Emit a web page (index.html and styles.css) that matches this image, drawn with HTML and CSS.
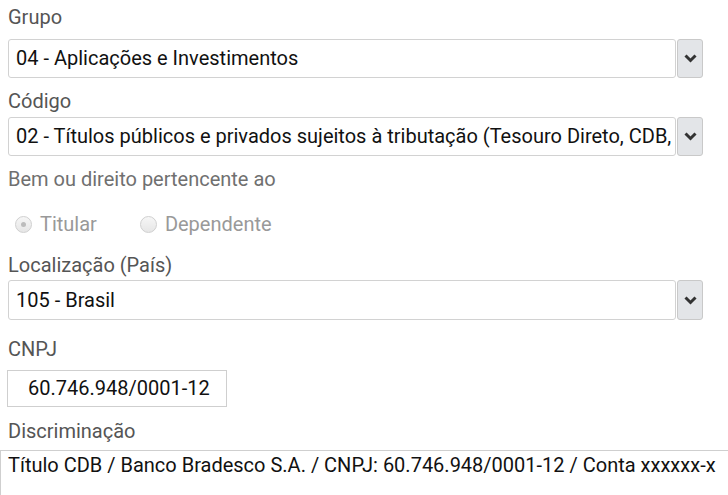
FILE: index.html
```html
<!DOCTYPE html>
<html lang="pt-br">
  <head>
    <meta charset="UTF-8" />
    <meta name="viewport" content="width=device-width, initial-scale=1.0" />
    <title>Bens e Direitos</title>
    <link rel="stylesheet" href="styles.css">
  </head>
  <body>
    <main class="formulario">
      <div class="grupo">
        <label class="rotulo">Grupo</label>
        <div class="combo">
          <div class="combo-valor">04 - Aplicações e Investimentos</div>
          <span class="combo-seta">
            <svg width="13" height="9" viewBox="0 0 13 9"><polyline points="1.5,1.5 6.5,6.5 11.5,1.5" /></svg>
          </span>
        </div>
      </div>

      <div class="grupo grupo-codigo">
        <label class="rotulo">Código</label>
        <div class="combo">
          <div class="combo-valor">02 - Títulos públicos e privados sujeitos à tributação (Tesouro Direto, CDB,</div>
          <span class="combo-seta">
            <svg width="13" height="9" viewBox="0 0 13 9"><polyline points="1.5,1.5 6.5,6.5 11.5,1.5" /></svg>
          </span>
        </div>
      </div>

      <div class="grupo grupo-bem">
        <label class="rotulo rotulo-claro">Bem ou direito pertencente ao</label>
        <div class="radios">
          <label class="radio"><span class="bolinha marcada"></span>Titular</label>
          <label class="radio"><span class="bolinha"></span>Dependente</label>
        </div>
      </div>

      <div class="grupo grupo-local">
        <label class="rotulo">Localização (País)</label>
        <div class="combo combo-alto">
          <div class="combo-valor">105 - Brasil</div>
          <span class="combo-seta">
            <svg width="13" height="9" viewBox="0 0 13 9"><polyline points="1.5,1.5 6.5,6.5 11.5,1.5" /></svg>
          </span>
        </div>
      </div>

      <div class="grupo grupo-cnpj">
        <label class="rotulo">CNPJ</label>
        <div class="entrada">60.746.948/0001-12</div>
      </div>

      <div class="grupo grupo-discr">
        <label class="rotulo">Discriminação</label>
        <div class="area">Título CDB / Banco Bradesco S.A. / CNPJ: 60.746.948/0001-12 / Conta xxxxxx-x</div>
      </div>
    </main>
  </body>
</html>
```

FILE: styles.css
```css
body {
  margin: 0;
  font-family: Roboto, "Liberation Sans", Arial, sans-serif;
  font-size: 20px;
  line-height: 21px;
  color: #111;
  background-color: #fff;
  overflow: hidden;
}

.formulario {
  padding-top: 7px;
}

.grupo {
  display: flex;
  flex-direction: column;
}

.rotulo {
  display: block;
  color: #555;
  margin-left: 8px;
}

.rotulo-claro {
  color: #707070;
}

/* Combo (select com botão) */
.combo {
  display: flex;
  align-items: stretch;
  margin-left: 8px;
  margin-top: 11px;
  height: 39px;
  width: 695px;
}

.combo-alto {
  height: 40px;
  margin-top: 4px;
}

.combo-valor {
  flex: 1;
  min-width: 0;
  border: 1px solid #d2d2d2;
  border-radius: 3px;
  padding: 0 7px;
  display: flex;
  align-items: center;
  white-space: nowrap;
  overflow: hidden;
}

.combo-seta {
  width: 24px;
  margin-left: 1px;
  background-color: #e3e5e8;
  border: 1px solid #c9c9c9;
  border-radius: 3px;
  display: flex;
  align-items: center;
  justify-content: center;
}

.combo-seta polyline {
  fill: none;
  stroke: #333;
  stroke-width: 3;
}

.grupo-codigo {
  margin-top: 13px;
}

.grupo-codigo .combo {
  margin-top: 5px;
}

/* Radios */
.grupo-bem {
  margin-top: 13px;
}

.radios {
  display: flex;
  gap: 43px;
  margin-top: 24px;
  margin-left: 15px;
  color: #999;
}

.radio {
  display: flex;
  align-items: center;
  gap: 8px;
}

.bolinha {
  width: 17px;
  height: 17px;
  border: 1px solid #d0d0d0;
  border-radius: 50%;
  background: linear-gradient(#f6f6f6, #e6e6e6);
  position: relative;
  box-sizing: border-box;
}

.bolinha.marcada::after {
  content: "";
  position: absolute;
  left: 5px;
  top: 5px;
  width: 5px;
  height: 5px;
  border-radius: 50%;
  background-color: #bcbcbc;
}

.grupo-local {
  margin-top: 20px;
}

/* CNPJ */
.grupo-cnpj {
  margin-top: 19px;
}

.entrada {
  margin-left: 7px;
  margin-top: 10px;
  width: 220px;
  height: 37px;
  box-sizing: border-box;
  border: 1px solid #cfcfcf;
  padding-left: 20px;
  display: flex;
  align-items: center;
}

/* Discriminação */
.grupo-discr {
  margin-top: 14px;
}

.area {
  margin-top: 8px;
  height: 60px;
  border: 1px solid #cfcfcf;
  border-right: none;
  padding: 4px 7px;
  white-space: nowrap;
}
```
